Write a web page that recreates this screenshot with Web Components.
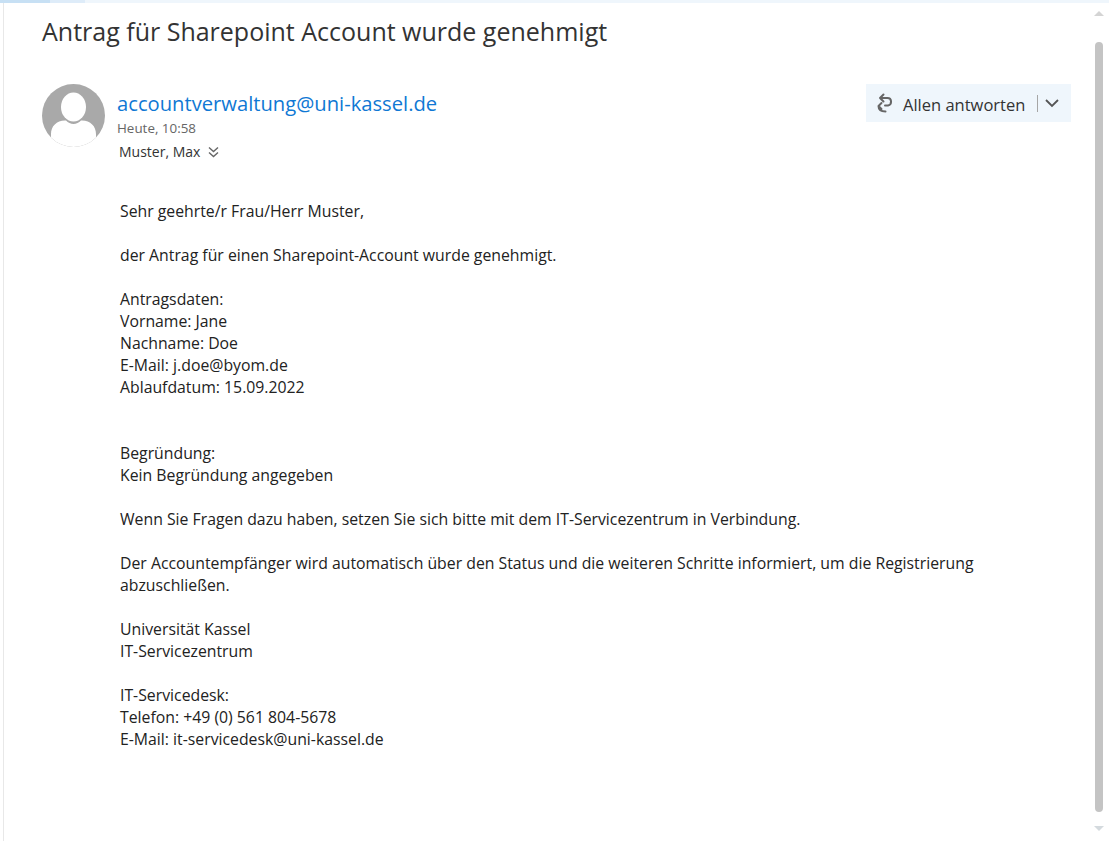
<!DOCTYPE html>
<html lang="de"><head><meta charset="utf-8">
<style>
html,body{margin:0;height:100%;background:#fff;overflow:hidden}
body{font-family:"Open Sans","Noto Sans",sans-serif;color:#333}
</style></head><body>
<template id="t-app"><style>
:host{display:flex;flex-direction:column;height:841px;width:1109px}
.top{display:flex;height:3px;background:#eff6fc;flex:none}
.a{width:50px;background:#c7e0f4}.b{width:35px;background:#deecf9}
.row{flex:1;display:flex;min-height:0}
.main{flex:1;min-width:0;margin-left:3px;border-left:1px solid #e8e8e8;padding:0 19px 0 38px;display:flex;flex-direction:column}
</style><div class="top"><div class="a"></div><div class="b"></div></div>
<div class="row"><div class="main"><slot></slot></div><slot name="bar"></slot></div></template>

<template id="t-subject"><style>
:host{display:block;font-size:25px;line-height:32px;color:#333;padding-top:12px;height:33px}
</style><slot></slot></template>

<template id="t-head"><style>
:host{display:flex;margin-top:36px;height:84px}
.av{width:63px;height:63px;flex:none}
.info{flex:1;margin-left:12px;display:flex;flex-direction:column}
.from{font-size:20.2px;line-height:28px;margin-top:5px;color:#0f78d4;height:28px}
.time{font-size:13.4px;line-height:20px;color:#666;margin-top:1px}
.to{font-size:14px;line-height:20px;color:#333;margin-top:4px;margin-left:2px;display:flex;align-items:center;gap:8px}
</style>
<svg class="av" viewBox="0 0 63 63"><defs><clipPath id="c"><circle cx="31.5" cy="31.5" r="31.5"/></clipPath></defs>
<circle cx="31.5" cy="31.5" r="31.5" fill="#a9a9a9"/>
<g clip-path="url(#c)" fill="#fff"><ellipse cx="31.5" cy="23" rx="12.5" ry="14.5"/>
<path d="M9 63V50C9 42 15 36 24 36.500C28 41 35 41 39 36.500C48 36 54 42 54 50V63Z"/></g></svg>
<div class="info"><div class="from"><slot name="from"></slot></div><div class="time"><slot name="time"></slot></div>
<div class="to"><slot name="to"></slot>
<svg width="11" height="12" viewBox="0 0 11 12" fill="none" stroke="#666" stroke-width="1.400"><path d="M1 1.500 5.500 5.500 10 1.500M1 6.500 5.500 10.500 10 6.500"/></svg></div></div>
<slot name="action"></slot></template>

<template id="t-reply"><style>
:host{display:flex;align-items:center;align-self:flex-start;height:38px;width:205px;background:#eff6fc;box-sizing:border-box;padding-left:10px;font-size:16.5px;color:#333}
.t{margin-left:9px;position:relative;top:1px}.sep{width:1px;height:17px;background:#a6a6a6;margin-left:12px}
.ch{margin-left:7px}
</style>
<svg width="18" height="20" viewBox="0 0 18 20" fill="none" stroke="#666" stroke-width="2" stroke-linecap="round" stroke-linejoin="round"><path d="M7.500 1.500 4 5l3.500 3.500M4 5h7.500c4.500 0 4.800 6.500.5 7.500H9"/><path d="M5.500 10 2.500 13l3 3M2.500 13c0 3.500 2.500 5.500 7 5.500"/></svg>
<span class="t"><slot></slot></span><span class="sep"></span>
<svg class="ch" width="14" height="9" viewBox="0 0 14 9" fill="none" stroke="#555" stroke-width="1.800"><path d="M1 1l6 6 6-6"/></svg></template>

<template id="t-body"><style>
:host{display:block;font-size:15.8px;line-height:22px;color:#222;margin-top:32px;margin-left:78px;width:870px}
</style><slot></slot></template>

<template id="t-bar"><style>
:host{display:flex;flex-direction:column;align-items:center;width:18px;margin-right:1px;flex:none}
.up,.dn{width:0;height:0;border-left:5px solid transparent;border-right:5px solid transparent;flex:none}
.up{border-bottom:5px solid #d4d4d4;margin-top:8px}
.dn{border-top:5px solid #d4dade;margin-top:14px}
.th{width:8px;height:770px;background:#c4c4c4;border-radius:4px;margin-top:26px;flex:none}
</style><div class="up"></div><div class="th"></div><div class="dn"></div></template>

<mail-app>
<mail-subject>Antrag für Sharepoint Account wurde genehmigt</mail-subject>
<mail-head>
<span slot="from">accountverwaltung@uni-kassel.de</span>
<span slot="time">Heute, 10:58</span>
<span slot="to">Muster, Max</span>
<reply-button slot="action">Allen antworten</reply-button>
</mail-head>
<mail-body>Sehr geehrte/r Frau/Herr Muster,<br><br>der Antrag für einen Sharepoint-Account wurde genehmigt.<br><br>Antragsdaten:<br>Vorname: Jane<br>Nachname: Doe<br>E-Mail: j.doe@byom.de<br>Ablaufdatum: 15.09.2022<br><br><br>Begründung:<br>Kein Begründung angegeben<br><br>Wenn Sie Fragen dazu haben, setzen Sie sich bitte mit dem IT-Servicezentrum in Verbindung.<br><br>Der Accountempfänger wird automatisch über den Status und die weiteren Schritte informiert, um die Registrierung abzuschließen.<br><br>Universität Kassel<br>IT-Servicezentrum<br><br>IT-Servicedesk:<br>Telefon: +49 (0) 561 804-5678<br>E-Mail: it-servicedesk@uni-kassel.de</mail-body>
<scroll-bar slot="bar"></scroll-bar>
</mail-app>
<script>
for(const [n,id] of [["mail-app","t-app"],["mail-subject","t-subject"],["mail-head","t-head"],["reply-button","t-reply"],["mail-body","t-body"],["scroll-bar","t-bar"]]){
customElements.define(n,class extends HTMLElement{constructor(){super();this.attachShadow({mode:"open"}).appendChild(document.getElementById(id).content.cloneNode(true))}})}
</script></body></html>
